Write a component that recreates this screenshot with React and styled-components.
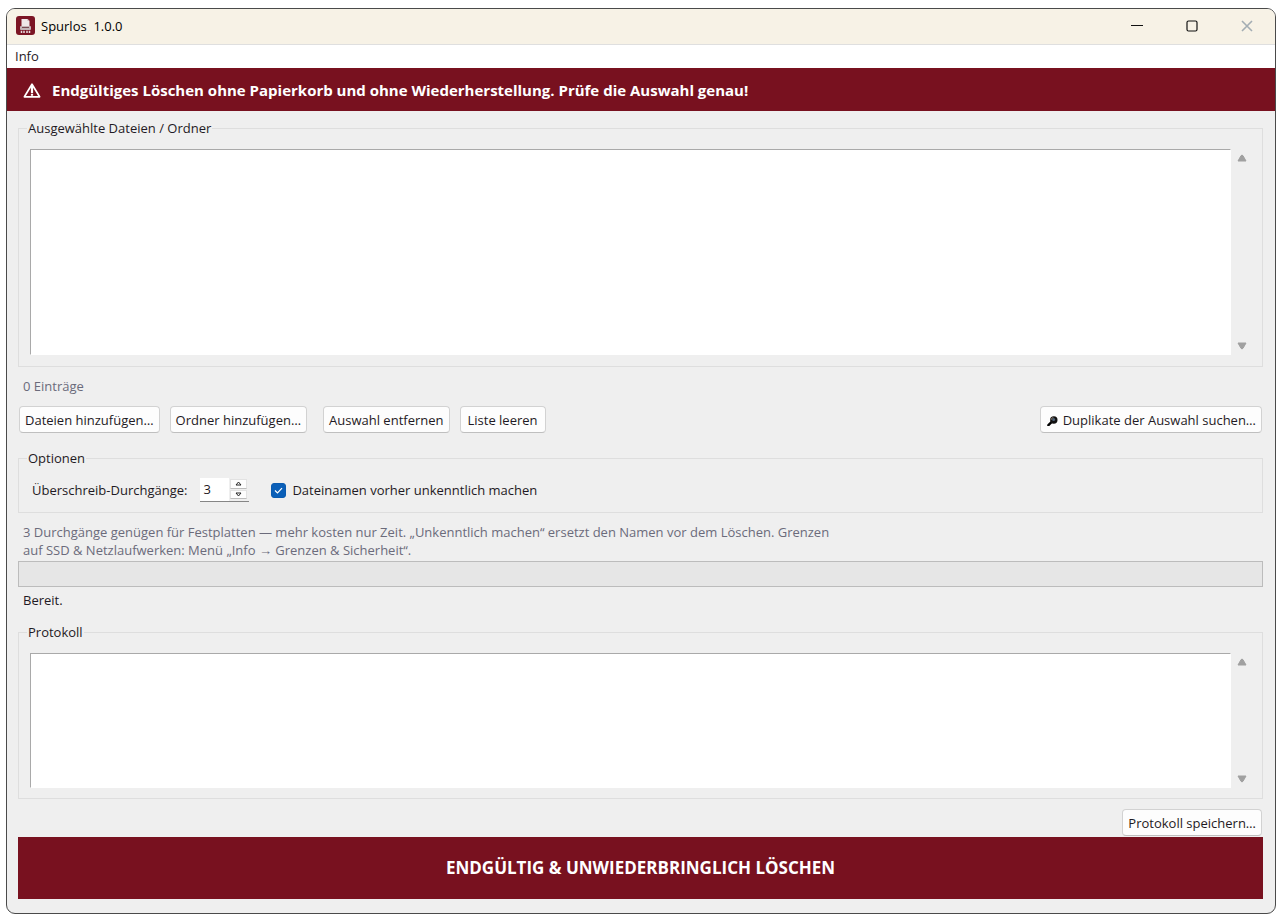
import React from 'react';
import styled, { createGlobalStyle } from 'styled-components';

const GlobalStyle = createGlobalStyle`
  * {
    box-sizing: border-box;
  }

  body {
    margin: 0;
    background: #fff;
    color: #1f1a24;
    font: 13px/18px 'Open Sans', 'Noto Sans', sans-serif;
  }

  button, input, select, textarea {
    margin: 0;
    color: inherit;
    font: inherit;
  }
`;

const Window = styled.div`
  display: flex;
  flex-direction: column;
  min-height: calc(100vh - 12px);
  margin: 8px 4px 4px 6px;
  overflow: hidden;
  border: 1px solid #4a4a4a;
  border-radius: 9px;
  background: #efefef;
`;

const TitleBar = styled.header`
  display: flex;
  align-items: center;
  height: 36px;
  padding: 0 1px 2px 9px;
  border-bottom: 1px solid #dfdfdf;
  background: #f7f2e6;
`;

const Title = styled.h1`
  flex: 1;
  margin: 0 0 0 6px;
  color: #000;
  font: 13px/18px 'Open Sans', sans-serif;
  font-weight: 400;
  white-space: pre;
`;

const CaptionButton = styled.button`
  display: flex;
  align-items: center;
  justify-content: center;
  width: 55px;
  height: 33px;
  padding: 0;
  border: 0;
  background: none;
  color: ${props => props.$muted ? '#a3adb3' : '#111'};
`;

const MenuBar = styled.nav`
  display: flex;
  align-items: center;
  height: 23px;
  padding: 0 2px 2px;
  background: #fff;
`;

const MenuItem = styled.button`
  padding: 0 6px;
  border: 0;
  background: none;
`;

const Banner = styled.div`
  display: flex;
  align-items: center;
  height: 43px;
  padding-left: 16px;
  gap: 11px;
  background: #78111f;
  color: #fff;
  font-size: 15px;
  font-weight: 700;
`;

const Content = styled.main`
  display: flex;
  flex: 1;
  flex-direction: column;
  padding: 8px 12px 14px 11px;
`;

const Group = styled.fieldset`
  display: flex;
  flex: ${props => props.$grow ? '1 1 auto' : '0 0 auto'};
  min-width: 0;
  margin: ${props => props.$top || 0}px 0 0;
  padding: ${props => props.$pad || 12}px 11px 10px;
  border: 1px solid #dedede;
`;

const Legend = styled.legend`
  margin-left: -3px;
  padding: 0 1px;
`;

const FieldRow = styled.div`
  display: flex;
  flex: 1;
  align-items: center;
  padding-left: 2px;
`;

const ScrollArea = styled.div`
  display: flex;
  flex: 1;
  min-height: ${props => props.$height}px;
`;

const sunken = `
  flex: 1;
  min-width: 0;
  padding: 2px 4px;
  outline: 0;
  border: 1px solid #fff;
  border-top-color: #a9a9a9;
  border-left-color: #a9a9a9;
  border-radius: 0;
  background: #fff;
`;

const FileList = styled.select`
  ${sunken}
  appearance: none;
  overflow: hidden;
`;

const Log = styled.textarea`
  ${sunken}
  resize: none;
`;

const ScrollTrack = styled.div`
  display: flex;
  flex-direction: column;
  justify-content: space-between;
  width: 20px;
  padding: 4px 0;
`;

const ScrollButton = styled.button`
  display: flex;
  align-items: center;
  justify-content: center;
  width: 20px;
  height: 10px;
  padding: 0 0 0 2px;
  border: 0;
  background: none;
  color: #a0a0a0;
`;

const Muted = styled.p`
  max-width: 826px;
  margin: 10px 0 0 5px;
  color: #6b6b7b;
`;

const Toolbar = styled.div`
  display: flex;
  gap: 10px;
  margin: 11px 1px 0;
`;

const ToolGroup = styled.div`
  display: flex;
  gap: 10px;
  margin-right: ${props => props.$push ? 'auto' : '6px'};
`;

const Button = styled.button`
  display: flex;
  align-items: center;
  justify-content: center;
  height: 27px;
  min-width: 86px;
  padding: 0 5px;
  gap: 4px;
  border: 1px solid #d2d2d2;
  border-bottom-color: #bfbfbf;
  border-radius: 4px;
  background: #fdfdfd;
  white-space: nowrap;
`;

const SpinBox = styled.div`
  display: flex;
  width: 49px;
  height: 24px;
  margin: 0 22px 0 13px;
  border-bottom: 1px solid #868686;
`;

const SpinInput = styled.input`
  width: 29px;
  padding: 0 3px 2px;
  border: 0;
  outline: 0;
  background: #fff;
  appearance: textfield;

  &::-webkit-inner-spin-button {
    display: none;
  }
`;

const SpinButtons = styled.div`
  display: flex;
  flex: 1;
  flex-direction: column;
  gap: 1px;
  padding: 1px 2px 2px 1px;
`;

const SpinButton = styled.button`
  display: flex;
  flex: 1;
  align-items: center;
  justify-content: center;
  padding: 0;
  border: 1px solid #e2e2e2;
  border-bottom-color: #bcbcbc;
  background: #fdfdfd;
`;

const CheckLabel = styled.label`
  display: flex;
  align-items: center;
  gap: 6px;
`;

const CheckWrap = styled.span`
  display: grid;
  width: 15px;
  height: 15px;

  > * {
    grid-area: 1 / 1;
  }

  svg {
    pointer-events: none;
  }
`;

const CheckBox = styled.input`
  width: 15px;
  height: 15px;
  border: 1px solid #8a8a8a;
  border-radius: 3px;
  appearance: none;
  background: #fff;

  &:checked {
    border-color: #0a5bb0;
    background: #0a5fb8;
  }
`;

const Progress = styled.div`
  height: 26px;
  margin-top: 2px;
  border: 1px solid #bcbcbc;
  background: #e6e6e6;
`;

const Status = styled.p`
  margin: 4px 0 0 5px;
`;

const Footer = styled.div`
  display: flex;
  justify-content: flex-end;
  margin: 10px 1px 1px;
`;

const DeleteButton = styled.button`
  height: 62px;
  border: 0;
  background: #78111f;
  color: #fff;
  font-size: 17px;
  font-weight: 700;
`;

const AppIcon = () => (
  <svg width="19" height="19" viewBox="0 0 19 19" aria-hidden="true">
    <rect width="19" height="19" rx="3" fill="#7c1524" />
    <path d="M5.5 3h6l2 2v6h-8z" fill="#efe6e8" />
    <path d="M11.5 3v2h2z" fill="#c9aeb3" />
    <rect x="4" y="10" width="11" height="4" rx="1" fill="#c4b4b8" />
    <rect x="6" y="11" width="7" height="1" fill="#7a4a53" />
    <path d="M5.5 14.8v2.2M8 14.8v2.2M11 14.8v2.2M13.5 14.8v2.2" stroke="#eadfe1" strokeWidth="1.5" />
  </svg>
);

const WarningIcon = () => (
  <svg width="18" height="16" viewBox="0 0 18 16" fill="none" stroke="#fff" aria-hidden="true">
    <path d="M9 2.2 16.6 14.8H1.4z" strokeWidth="1.7" strokeLinejoin="round" />
    <path d="M9 4v7.2M9 12v1.8" strokeWidth="2.2" />
  </svg>
);

const SearchIcon = () => (
  <svg width="13" height="13" viewBox="0 0 13 13" aria-hidden="true">
    <path d="M2.4 12.2 5.5 9.2" stroke="#000" strokeWidth="2.4" strokeLinecap="round" />
    <circle cx="7.8" cy="7" r="3.7" fill="#111" />
    <circle cx="7.6" cy="6.4" r="1.5" fill="#4d6276" />
    <path d="M5.2 6.8a2.6 2.6 0 0 1 2.2-2.4" stroke="#8c7a6a" fill="none" />
  </svg>
);

const ArrowIcon = ({ down }) => (
  <svg width="10" height="8" viewBox="0 0 10 8" aria-hidden="true">
    <path
      d={down ? 'M1 1h8L6 6.3Q5 7.6 4 6.3z' : 'M1 7h8L6 1.7Q5 .4 4 1.7z'}
      fill="currentColor"
      stroke="currentColor"
      strokeLinejoin="round"
    />
  </svg>
);

const SpinIcon = ({ down }) => (
  <svg width="7" height="5" viewBox="0 0 7 5" fill="none" stroke="#222" aria-hidden="true">
    <path d={down ? 'M1 1h5L3.5 4z' : 'M1 4h5L3.5 1z'} strokeLinejoin="round" />
  </svg>
);

const Scrollbar = ({ name }) => (
  <ScrollTrack>
    <ScrollButton aria-label={`${name} nach oben`}><ArrowIcon /></ScrollButton>
    <ScrollButton aria-label={`${name} nach unten`}><ArrowIcon down /></ScrollButton>
  </ScrollTrack>
);

class App extends React.Component {
  state = { passes: 3, rename: true };

  step = (delta) => {
    this.setState(({ passes }) => ({ passes: Math.max(1, passes + delta) }));
  };

  render() {
    const { passes, rename } = this.state;

    return (
      <Window>
        <GlobalStyle />
        <TitleBar>
          <AppIcon />
          <Title>{'Spurlos  1.0.0'}</Title>
          <CaptionButton aria-label="Minimieren">
            <svg width="12" height="12" stroke="currentColor"><path d="M0 5.5h12" /></svg>
          </CaptionButton>
          <CaptionButton aria-label="Maximieren">
            <svg width="12" height="12" fill="none" stroke="currentColor" strokeWidth="1.2">
              <rect x="1" y="1" width="10" height="10" rx="1.5" />
            </svg>
          </CaptionButton>
          <CaptionButton $muted aria-label="Schließen">
            <svg width="12" height="12" stroke="currentColor" strokeWidth="1.6">
              <path d="M1 1l10 10M11 1L1 11" />
            </svg>
          </CaptionButton>
        </TitleBar>
        <MenuBar>
          <MenuItem>Info</MenuItem>
        </MenuBar>
        <Banner>
          <WarningIcon />
          Endgültiges Löschen ohne Papierkorb und ohne Wiederherstellung. Prüfe die Auswahl genau!
        </Banner>

        <Content>
          <Group $grow>
            <Legend>Ausgewählte Dateien / Ordner</Legend>
            <ScrollArea $height={206}>
              <FileList multiple aria-label="Ausgewählte Dateien / Ordner" />
              <Scrollbar name="Liste" />
            </ScrollArea>
          </Group>
          <Muted>0 Einträge</Muted>

          <Toolbar>
            <ToolGroup>
              <Button>Dateien hinzufügen…</Button>
              <Button>Ordner hinzufügen…</Button>
            </ToolGroup>
            <ToolGroup $push>
              <Button>Auswahl entfernen</Button>
              <Button>Liste leeren</Button>
            </ToolGroup>
            <Button><SearchIcon />Duplikate der Auswahl suchen…</Button>
          </Toolbar>

          <Group $top={16} $pad={11}>
            <Legend>Optionen</Legend>
            <FieldRow>
              <label htmlFor="passes">Überschreib-Durchgänge:</label>
              <SpinBox>
                <SpinInput
                  id="passes"
                  type="number"
                  min="1"
                  value={passes}
                  onChange={e => this.setState({ passes: Number(e.target.value) })}
                />
                <SpinButtons>
                  <SpinButton aria-label="Mehr" onClick={() => this.step(1)}><SpinIcon /></SpinButton>
                  <SpinButton aria-label="Weniger" onClick={() => this.step(-1)}><SpinIcon down /></SpinButton>
                </SpinButtons>
              </SpinBox>
              <CheckLabel>
                <CheckWrap>
                  <CheckBox
                    type="checkbox"
                    checked={rename}
                    onChange={e => this.setState({ rename: e.target.checked })}
                  />
                  <svg width="15" height="15" fill="none" stroke="#fff" strokeWidth="1.2">
                    <path d="M4 7.5 6.5 10 11 5.2" />
                  </svg>
                </CheckWrap>
                Dateinamen vorher unkenntlich machen
              </CheckLabel>
            </FieldRow>
          </Group>

          <Muted>
            3 Durchgänge genügen für Festplatten — mehr kosten nur Zeit. „Unkenntlich machen“ ersetzt
            den Namen vor dem Löschen. Grenzen auf SSD &amp; Netzlaufwerken: Menü „Info → Grenzen &amp; Sicherheit“.
          </Muted>
          <Progress role="progressbar" aria-label="Fortschritt" aria-valuenow={0} />
          <Status>Bereit.</Status>

          <Group $top={14}>
            <Legend>Protokoll</Legend>
            <ScrollArea $height={135}>
              <Log readOnly aria-label="Protokoll" />
              <Scrollbar name="Protokoll" />
            </ScrollArea>
          </Group>

          <Footer>
            <Button>Protokoll speichern…</Button>
          </Footer>
          <DeleteButton>ENDGÜLTIG &amp; UNWIEDERBRINGLICH LÖSCHEN</DeleteButton>
        </Content>
      </Window>
    );
  }
}

export default App;
